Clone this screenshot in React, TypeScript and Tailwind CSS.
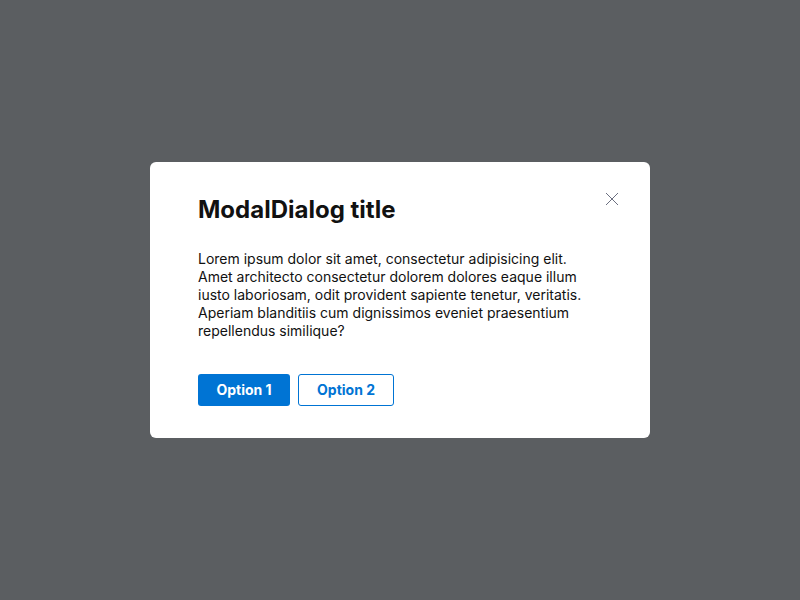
export default function App() {
    return (
        <div
            className="w-[800px] h-[600px] bg-[#5b5e61] flex items-center justify-center"
            style={{ fontFamily: "Inter, 'Noto Sans', sans-serif" }}
        >
            <div className="relative w-[500px] bg-white rounded-md pt-8 pb-8 px-12">
                <button className="absolute top-[29px] right-[30px] w-4 h-4 flex items-center justify-center" aria-label="Close">
                    <svg width="14" height="14" viewBox="0 0 14 14" fill="none" stroke="#6b6f80" strokeWidth="1">
                        <path d="M1 1L13 13M13 1L1 13" />
                    </svg>
                </button>
                <h2 className="text-2xl leading-8 font-bold text-[#111]">ModalDialog title</h2>
                <p className="mt-6 text-sm leading-[18px] text-[#111]">
                    Lorem ipsum dolor sit amet, consectetur adipisicing elit. Amet architecto consectetur dolorem dolores eaque illum iusto laboriosam, odit provident sapiente tenetur, veritatis. Aperiam blanditiis cum dignissimos eveniet praesentium repellendus similique?
                </p>
                <div className="mt-[34px] flex gap-2">
                    <button className="h-8 w-[92px] rounded-[3px] bg-[#0074d4] text-white text-sm font-bold">
                        Option 1
                    </button>
                    <button className="h-8 w-[96px] rounded-[3px] border border-[#0074d4] bg-white text-[#0074d4] text-sm font-bold">
                        Option 2
                    </button>
                </div>
            </div>
        </div>
    );
}
